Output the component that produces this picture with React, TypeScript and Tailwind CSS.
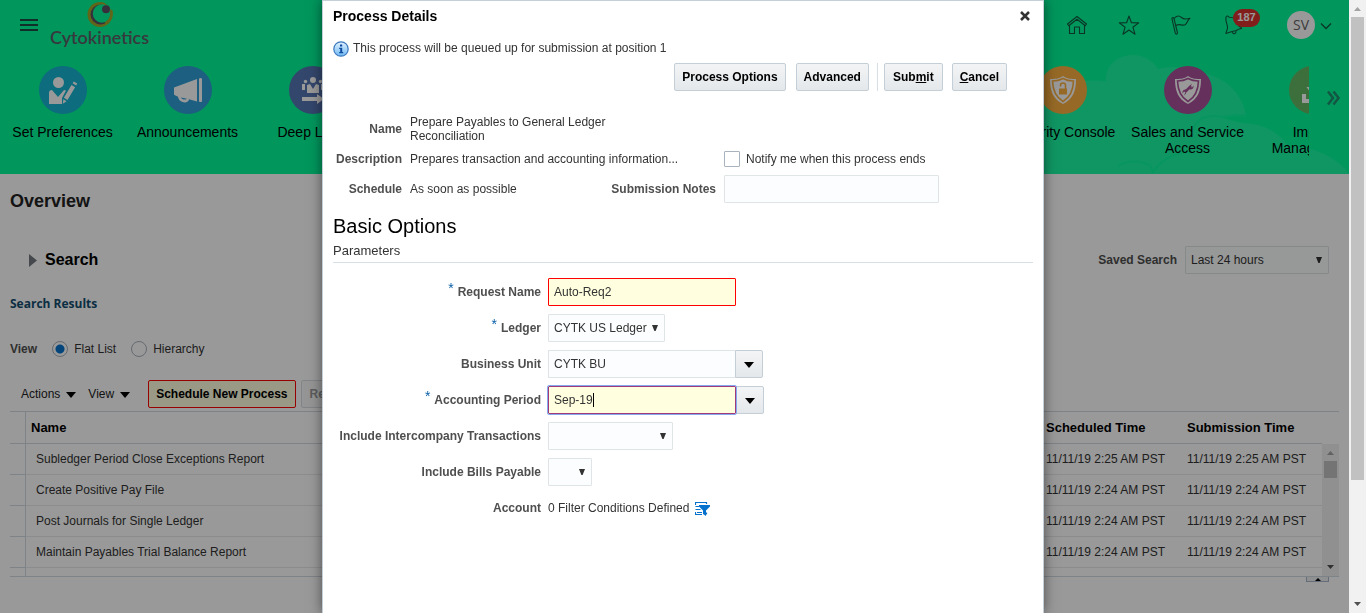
import React, { useEffect, useRef } from "react";

const UI = "font-['Liberation_Sans',Arial,sans-serif]";

function Tile({ label, color, children }: { label: string; color: string; children?: React.ReactNode }) {
  return (
    <a href="#" className="flex w-[125px] shrink-0 flex-col items-center text-center text-sm leading-4 text-black">
      <span className={`mb-2.5 flex size-12 items-center justify-center rounded-full ${color}`}>
        <svg viewBox="0 0 48 48" className="size-12" fill="#fff" aria-hidden="true">
          {children}
        </svg>
      </span>
      <span className="max-w-[120px]">{label}</span>
    </a>
  );
}

function HeaderIcon({ label, children }: { label: string; children: React.ReactNode }) {
  return (
    <button type="button" aria-label={label} className="flex size-6 items-center justify-center">
      <svg viewBox="0 0 24 24" className="size-6" fill="none" stroke="#12583f" strokeWidth="1.1" strokeLinejoin="round" strokeLinecap="round" aria-hidden="true">
        {children}
      </svg>
    </button>
  );
}

function Arrow({ className = "h-1.5 w-2.5" }: { className?: string }) {
  return (
    <svg viewBox="0 0 10 6" preserveAspectRatio="none" className={`shrink-0 ${className}`} aria-hidden="true">
      <path d="M0 0h10L5 6z" fill="currentColor" />
    </svg>
  );
}

function Pick({ id, options, className }: { id: string; options: string[]; className: string }) {
  return (
    <span className={`relative inline-flex ${className}`}>
      <select id={id} className="h-7 w-full appearance-none rounded-[1px] border border-[#dfe4e7] bg-[#fcfdfe] pr-4 pl-[5px] text-xs text-[#333]">
        {options.map((o) => (
          <option key={o}>{o}</option>
        ))}
      </select>
      <svg viewBox="0 0 6 6" className="pointer-events-none absolute top-[11px] right-[7px] size-1.5" aria-hidden="true">
        <path d="M0 0h6L3.600 6H2.400z" fill="#333" />
      </svg>
    </span>
  );
}

function AppHeader() {
  return (
    <header className="relative h-[174px] overflow-hidden bg-[#03fa99]">
      <svg viewBox="0 0 306 120" className="absolute right-0 bottom-0 h-[120px] w-[306px]" fill="#1bfaa6" aria-hidden="true">
        <path d="M0 120V38c18-9 40-13 63-11C62 12 74 1 90 1c11 0 20 6 25 14 12-3 24-3 33 4 26-3 50 16 55 41l-24 4 20 5c20 0 37 9 47 24 24-2 50 12 60 27z" />
        <path d="M75 112c10-6 20-6 32-1l3 7c8-12 22-20 38-20M150 76c4-12 14-16 30-13 8-3 16-2 23-1" fill="none" stroke="#0dfa9e" strokeWidth="2" />
      </svg>
      <div className="relative flex h-[49px] items-center justify-between pr-[17px] pl-5">
        <div className="flex h-full items-center gap-3">
          <button type="button" aria-label="Navigator" className="flex w-[18px] flex-col gap-[3px]">
            <span className="h-0.5 bg-[#1b4f44]" />
            <span className="h-0.5 bg-[#1b4f44]" />
            <span className="h-0.5 bg-[#1b4f44]" />
          </button>
          <a href="#" className="flex h-full flex-col items-center text-[#5c5f68]">
            <svg viewBox="0 0 26 26" className="mt-0.5 size-[26px] shrink-0" aria-hidden="true">
              <circle cx="13" cy="12.500" r="12.500" fill="#a4ab28" />
              <circle cx="13.500" cy="12.500" r="10" fill="#5a5064" />
              <circle cx="15" cy="11.500" r="9.200" fill="#03fa99" />
              <path d="M18.500 0.800A12.500 12.500 0 0 1 25 8" fill="none" stroke="#03fa99" strokeWidth="2" />
              <circle cx="19" cy="7.300" r="4" fill="#5a5064" />
              <path d="M24 8c1.500 6-1 11-5.500 13.500" fill="none" stroke="#a4ab28" strokeWidth="2.800" />
            </svg>
            <span className="font-[Lato,sans-serif] text-[18px] leading-[18px] font-semibold">Cytokinetics</span>
          </a>
        </div>
        <div className="flex items-center gap-7">
          <HeaderIcon label="Home">
            <path d="M2.500 11L12 3.500l9.500 7.500-1.200 1.700L12 6.300l-8.300 6.400zM4.500 12.500V20.500h5v-6.500h5v6.500h5v-8" />
          </HeaderIcon>
          <HeaderIcon label="Favorites">
            <path d="M12 3l2.400 6.800 7.300.1-5.800 4.300 2.100 7L12 17l-6 4.200 2.100-7L2.300 9.900l7.300-.1z" />
          </HeaderIcon>
          <HeaderIcon label="Watchlist">
            <path d="M3 6c-.4-1.400 1.600-2 2-.5L8.500 20c-.2 1.500-1.800 1.500-2.200.2zM5 5.500C8 2 10.500 2.500 12.500 4.500s4 2 8.500.8c-2.500 2-2.500 4-4.500 6.200-3.500 2-5.500-1.500-9.700 1" />
          </HeaderIcon>
          <span className="relative flex">
            <HeaderIcon label="Notifications">
              <path d="M5 4.500c0-1.800 2.500-2 3-.3 4.500 0 8 2 9 5.800-.5 4 4 4 3.500 5.500-2 .5-3 0-5 2-4 .500-6 1.500-10.500 3 0-2.500 1.500-3 1.500-6 0-4-2.500-6-1.500-10zM11.500 19.500c1 2 3.500 1.500 3.500-1" />
            </HeaderIcon>
            <span className="absolute -top-1 left-3 flex h-[18px] w-[27px] items-center justify-center rounded-full bg-[#d8332f] text-[11px] font-bold text-white">187</span>
          </span>
          <button type="button" aria-label="Settings and Actions" className="ml-3.5 flex items-center gap-[5px]">
            <span className="flex size-7 items-center justify-center rounded-full bg-white font-['Open_Sans',sans-serif] text-sm text-[#666]">SV</span>
            <svg viewBox="0 0 12 12" className="mt-0.5 size-3" fill="none" stroke="#12583f" strokeWidth="1.300" aria-hidden="true">
              <path d="M1 3.500l5 5 5-5" />
            </svg>
          </button>
        </div>
      </div>
      <nav className="relative mt-[17px] flex justify-between pr-10">
        <div className="flex">
          <Tile label="Set Preferences" color="bg-[#16b4d0]">
            <circle cx="19.500" cy="16.500" r="5.500" />
            <path d="M10 38V27q0-3 3-3l6 7 6-7 2 .5L23 32v6z" />
            <path d="M32.500 19l3.600 2.200L28.500 34l-3.600-2.200zM33.600 17.200l1.200-1.700 3.400 2-1 1.900zM24.300 33.200l3.200 2-3.600 2.600z" />
          </Tile>
          <Tile label="Announcements" color="bg-[#309ed6]">
            <path d="M10 21.500L33 13v22.500l-8-2.200c0 4.500-10 4.500-11-2.500l-4-2zM17 31.500c1 2.500 5 2.500 6 1.300zM35 12.500q1.500-1 3 0v23q-1.500 1-3 0z" fillRule="evenodd" />
          </Tile>
          <Tile label="Deep Links" color="bg-[#5575b4]">
            <circle cx="24" cy="14" r="3" />
            <circle cx="16.500" cy="15.500" r="1.700" />
            <circle cx="31.500" cy="15.500" r="1.700" />
            <path d="M18 27v-8l3-1 3 5 3-5 3 1v8zM13 18h3v6h-3zM32 18h3v6h-3zM13 31h15v-3l7 5-7 5v-3H13z" />
          </Tile>
        </div>
        <div className="flex w-[309px] overflow-hidden">
          <Tile label="Security Console" color="bg-[#fbb040]">
            <path d="M24 10c4 3 8 3 13 3 0 12-3 20-13 25-10-5-13-13-13-25 5 0 9 0 13-3z" />
            <path d="M24 12.500c3.500 2 6.500 2.500 10.500 2.500-.3 10-3 16-10.500 20.500C16.500 31 13.800 25 13.500 15c4 0 7-.5 10.500-2.500z" fill="none" stroke="#fbb040" strokeWidth="1.600" />
            <path d="M20 22.500h8v6h-8z" fill="#fbb040" />
            <path d="M21.500 20.500v-1a2.500 2.500 0 0 1 5 0V23" fill="none" stroke="#fbb040" strokeWidth="1.600" />
          </Tile>
          <Tile label="Sales and Service Access" color="bg-[#aa5099]">
            <path d="M24 10c4 3 8 3 13 3 0 12-3 20-13 25-10-5-13-13-13-25 5 0 9 0 13-3z" />
            <path d="M24 12.500c3.500 2 6.500 2.500 10.500 2.500-.3 10-3 16-10.500 20.500C16.500 31 13.800 25 13.500 15c4 0 7-.5 10.500-2.500z" fill="none" stroke="#aa5099" strokeWidth="1.600" />
            <path d="M21 26l6-6" stroke="#aa5099" strokeWidth="2.500" />
            <path d="M28 17.500l-2 2 .5 1.500 1.500.5 1.500-2c.5 3-1.500 4.500-4 4M20 29.500l2-2-.5-1.500-1.500-.5-1.500 2c-.5-3 1.500-4.500 4-4" fill="#aa5099" />
          </Tile>
          <Tile label="Import Management" color="bg-[#66ba66]">
            <path d="M13 28h4v5h14v-5h4v9H13zM17.500 21h4l2.500 3 2.500-3h4L24 30z" />
          </Tile>
        </div>
        <button type="button" aria-label="Next" className="absolute top-6 right-2 flex size-4">
          <svg viewBox="0 0 16 16" className="size-4" fill="none" stroke="#1f8f70" strokeWidth="2.500" aria-hidden="true">
            <path d="M3 1.500L8 8l-5 6.500M8.500 1.500l5 6.500-5 6.500" />
          </svg>
        </button>
      </nav>
    </header>
  );
}

const rows: [string, string][] = [
  ["Subledger Period Close Exceptions Report", "11/11/19 2:25 AM PST"],
  ["Create Positive Pay File", "11/11/19 2:24 AM PST"],
  ["Post Journals for Single Ledger", "11/11/19 2:24 AM PST"],
  ["Maintain Payables Trial Balance Report", "11/11/19 2:24 AM PST"],
];

function Overview() {
  return (
    <main className="px-2.5 text-xs text-[#333]">
      <h1 className="pt-4 text-lg leading-[22px] font-bold text-[#222]">Overview</h1>
      <section className="mt-[34px] flex h-7 items-center justify-between pr-2.5 pl-[19px]">
        <h2 className="flex items-center gap-2 text-base font-bold text-black">
          <svg viewBox="0 0 8 13" className="h-[13px] w-2" aria-hidden="true">
            <path d="M0 0l8 6.500L0 13z" fill="#737b82" />
          </svg>
          Search
        </h2>
        <div className="flex items-center gap-2">
          <label htmlFor="saved" className="font-bold text-[#4f4f4f]">Saved Search</label>
          <Pick id="saved" options={["Last 24 hours"]} className="w-36" />
        </div>
      </section>
      <h3 className="mt-[21px] font-['Open_Sans',sans-serif] text-xs leading-[18px] font-bold text-[#134d6f]">Search Results</h3>
      <fieldset className="mt-[27px] flex h-[18px] items-center">
        <legend className="float-left font-bold text-[#4f4f4f]">View</legend>
        <label className="ml-[15px] flex items-center gap-1.5">
          <input type="radio" name="view" defaultChecked className="size-4 appearance-none rounded-full border border-[#a8b3be] bg-[radial-gradient(circle,#0572ce_4px,#fff_5px)]" />
          Flat List
        </label>
        <label className="ml-[15px] flex items-center gap-1.5">
          <input type="radio" name="view" className="size-4 appearance-none rounded-full border border-[#a8b3be] bg-white" />
          Hierarchy
        </label>
      </fieldset>
      <div className="mt-[22px] flex h-7 items-center pl-[11px] text-black">
        <button type="button" className="flex items-center gap-1.5 text-[#222]">
          Actions <Arrow className="mt-0.5 h-1.5 w-2.5 text-black" />
        </button>
        <button type="button" className="ml-3 flex items-center gap-1.5 text-[#222]">
          View <Arrow className="mt-0.5 h-1.5 w-2.5 text-black" />
        </button>
        <button type="button" className="ml-[18px] h-7 rounded-xs border border-[#f00] bg-[#ffffdf] px-[7px] font-bold">Schedule New Process</button>
        <button type="button" className="ml-[5px] h-7 rounded-xs border border-[#d8dee3] bg-[#f8f9fa] px-2 font-bold text-[#999]">Resubmit</button>
      </div>
      <div className="mt-[3px] h-[166px] overflow-hidden border-y border-[#d0dae2]">
        <div className="flex">
          <table className="flex-1 table-fixed border-separate border-spacing-0 text-left">
            <colgroup>
              <col className="w-4" />
              <col />
              <col className="w-[141px]" />
              <col className="w-[141px]" />
            </colgroup>
            <thead>
              <tr className="h-8 text-[13px] text-black">
                <th className="border-r border-b border-[#d0dae2]" />
                <th className="border-b border-[#d0dae2] pl-[5px]">Name</th>
                <th className="border-b border-[#d0dae2] pl-1.5">Scheduled Time</th>
                <th className="border-b border-[#d0dae2] pl-1.5">Submission Time</th>
              </tr>
            </thead>
            <tbody>
              {rows.map(([name, time]) => (
                <tr key={name} className="h-[31px]">
                  <td className="border-r border-b border-[#d0dae2]" />
                  <td className="border-b border-[#e6eaed] pl-2.5">{name}</td>
                  <td className="border-b border-[#e6eaed] pl-1.5 whitespace-nowrap">{time}</td>
                  <td className="border-b border-[#e6eaed] pl-1.5 whitespace-nowrap">{time}</td>
                </tr>
              ))}
              <tr className="h-4">
                <td className="border-r border-[#d0dae2]" />
                <td colSpan={3} />
              </tr>
            </tbody>
          </table>
          <div className="mt-8 flex h-[132px] w-[17px] flex-col items-center bg-[#f1f1f1] pt-[7px] pb-[7px]">
            <Arrow className="h-1 w-[7px] rotate-180 text-[#a3a3a3]" />
            <span className="mt-[6px] mb-auto h-[17px] w-[13px] bg-[#c1c1c1]" />
            <Arrow className="h-1 w-[7px] text-[#505050]" />
          </div>
        </div>
      </div>
      <div className="flex justify-end pr-2.5">
        <button type="button" aria-label="Collapse" className="flex h-[5px] w-[23px] items-center justify-center border border-t-0 border-[#a8b8c8] bg-[#eef1f4]">
          <Arrow className="h-[3px] w-1.5 rotate-180 text-black" />
        </button>
      </div>
    </main>
  );
}

function PageScrollbar() {
  return (
    <div className="flex h-screen w-[17px] shrink-0 flex-col items-center bg-[#f1f1f1] pt-[7px] pb-[7px]" aria-hidden="true">
      <Arrow className="h-1 w-[7px] rotate-180 text-[#a3a3a3]" />
      <span className="mt-[6px] h-[463px] w-[13px] bg-[#c1c1c1]" />
      <Arrow className="mt-auto h-1 w-[7px] text-[#505050]" />
    </div>
  );
}

function DialogButton({ children, className = "px-[7px]" }: { children: React.ReactNode; className?: string }) {
  return (
    <button type="button" className={`h-7 rounded-xs border border-[#c4ced7] bg-linear-to-b from-[#f3f4f5] to-[#e4e8eb] text-xs font-bold text-black ${className}`}>
      {children}
    </button>
  );
}

function Row({ id, label, required, children }: { id: string; label: string; required?: boolean; children: React.ReactNode }) {
  return (
    <div className="flex h-7 items-center gap-[7px]">
      <label htmlFor={id} className="flex w-[208px] shrink-0 justify-end gap-1 font-bold whitespace-nowrap text-[#4f4f4f]">
        {required && <span className="-mt-1 text-sm leading-4 font-normal text-[#0a5fa8]">*</span>}
        <span>{label}</span>
      </label>
      <div className="flex items-center">{children}</div>
    </div>
  );
}

function DropButton({ label }: { label: string }) {
  return (
    <button type="button" aria-label={label} className="flex h-7 w-7 items-center justify-center rounded-r-xs border border-[#c4ced7] bg-linear-to-b from-[#f3f4f5] to-[#e4e8eb]">
      <Arrow className="mt-0.5 h-1.5 w-2.5 text-black" />
    </button>
  );
}

function ProcessDialog() {
  const period = useRef<HTMLInputElement>(null);
  useEffect(() => {
    period.current?.focus();
    period.current?.setSelectionRange(6, 6);
  }, []);
  return (
    <section role="dialog" aria-label="Process Details" className="h-screen w-[722px] border border-b-0 border-[#c4ced7] bg-white px-2.5 text-xs text-[#333] shadow-[0_0_12px_rgba(0,0,0,0.5)]">
      <div className="flex h-[29px] items-center justify-between pr-0.5">
        <h2 className="text-sm font-bold text-black">Process Details</h2>
        <button type="button" aria-label="Close" className="flex size-3 items-center justify-center">
          <svg viewBox="0 0 10 10" className="size-2.5" stroke="#333" strokeWidth="2.500" aria-hidden="true">
            <path d="M1 1l8 8M9 1L1 9" />
          </svg>
        </button>
      </div>
      <p className="flex h-[33px] items-center gap-1 pt-0.5">
        <svg viewBox="0 0 16 16" className="mt-0.5 size-4" aria-hidden="true">
          <defs>
            <linearGradient id="info" x1="0" y1="0" x2="0" y2="1">
              <stop offset="0" stopColor="#e4f3ff" />
              <stop offset="1" stopColor="#6db8f5" />
            </linearGradient>
          </defs>
          <circle cx="8" cy="8" r="7.200" fill="url(#info)" stroke="#3b78bd" strokeWidth="1.200" />
          <path d="M7 3.500h2.200v2H7zM6.200 6.800h3V11h1v1.200H6.200V11h1V8h-1z" fill="#0d4c9e" />
        </svg>
        This process will be queued up for submission at position 1
      </p>
      <div className="flex h-7 justify-end pr-[26px]">
        <DialogButton>Process Options</DialogButton>
        <DialogButton className="ml-2.5 px-[7px]">Advanced</DialogButton>
        <span className="mr-1.5 ml-2 w-px bg-[#d6dfe6]" />
        <DialogButton className="px-2">Sub<u>m</u>it</DialogButton>
        <DialogButton className="ml-[9px] px-[7px]"><u>C</u>ancel</DialogButton>
      </div>
      <dl className="mt-6 grid grid-cols-[69px_306px_1fr] items-center gap-x-2 leading-[14px]">
        <dt className="text-right font-bold text-[#4f4f4f]">Name</dt>
        <dd className="col-span-2 max-w-[220px]">Prepare Payables to General Ledger Reconciliation</dd>
        <dt className="mt-1.5 flex h-5 items-center justify-end font-bold text-[#4f4f4f]">Description</dt>
        <dd className="mt-1.5">Prepares transaction and accounting information...</dd>
        <dd className="mt-1.5 flex h-5 items-center">
          <label className="flex items-center gap-1.5">
            <input type="checkbox" className="size-4 appearance-none rounded-[1px] border border-[#a8b3be] bg-white" />
            Notify me when this process ends
          </label>
        </dd>
        <dt className="mt-1.5 flex h-7 items-center justify-end font-bold text-[#4f4f4f]">Schedule</dt>
        <dd className="mt-1.5 flex justify-between">
          As soon as possible
          <label htmlFor="notes" className="font-bold text-[#4f4f4f]">Submission Notes</label>
        </dd>
        <dd className="mt-1.5 flex h-7">
          <input id="notes" type="text" className="h-7 w-[215px] rounded-[1px] border border-[#dfe4e7] bg-[#fcfdfe] px-[5px]" />
        </dd>
      </dl>
      <h3 className="mt-2.5 text-xl leading-[26px] text-black">Basic Options</h3>
      <h4 className="border-b border-[#d6dfe6] pt-[5px] pb-1 text-[13px] leading-[14px]">Parameters</h4>
      <form className="mt-[15px] flex flex-col gap-2">
        <Row id="request" label="Request Name" required>
          <input id="request" type="text" defaultValue="Auto-Req2" className="h-7 w-[188px] rounded-[1px] border border-[#f00] bg-[#ffffdf] px-[5px]" />
        </Row>
        <Row id="ledger" label="Ledger" required>
          <Pick id="ledger" options={["CYTK US Ledger"]} className="w-[117px]" />
        </Row>
        <Row id="unit" label="Business Unit">
          <input id="unit" type="text" defaultValue="CYTK BU" className="h-7 w-[187px] rounded-l-[1px] border border-r-0 border-[#dfe4e7] bg-[#fcfdfe] px-[5px]" />
          <DropButton label="Search Business Unit" />
        </Row>
        <Row id="period" label="Accounting Period" required>
          <span className="relative z-10 flex">
            <input ref={period} id="period" type="text" defaultValue="Sep-19" className="peer h-7 w-[188px] rounded-[1px] border border-[#a03a78] bg-[#ffffdf] px-[5px] caret-transparent outline-1 outline-[#86a8ef]" />
            <span className="absolute top-[7px] left-[45px] hidden h-3.5 w-px bg-black peer-focus:block" />
          </span>
          <DropButton label="Search Accounting Period" />
        </Row>
        <Row id="inter" label="Include Intercompany Transactions">
          <Pick id="inter" options={[""]} className="w-[125px]" />
        </Row>
        <Row id="bills" label="Include Bills Payable">
          <Pick id="bills" options={[""]} className="w-11" />
        </Row>
        <Row id="account" label="Account">
          <output id="account">0 Filter Conditions Defined</output>
          <button type="button" aria-label="Edit filter" className="ml-1.5">
            <svg viewBox="0 0 15 15" className="size-[15px]" aria-hidden="true">
              <path d="M.5 4V1.500h11V3M4.500 5.500H.5M.5 8.500h5M.5 11v2.500h6.500M2 11.500h5M11.500 11.500v2" stroke="#0572ce" strokeWidth="1.200" fill="none" />
              <path d="M4 4h11v1.500L11 9.500V15l-3-2V9.500L4 5.500z" fill="#0572ce" />
            </svg>
          </button>
        </Row>
      </form>
    </section>
  );
}

export default function App() {
  return (
    <div className={`flex h-screen overflow-hidden bg-white ${UI}`}>
      <div className="relative min-w-0 flex-1">
        <AppHeader />
        <Overview />
        <div className="absolute inset-0 bg-black/40" />
      </div>
      <PageScrollbar />
      <div className="pointer-events-none fixed inset-0 flex justify-center *:pointer-events-auto">
        <ProcessDialog />
      </div>
    </div>
  );
}
